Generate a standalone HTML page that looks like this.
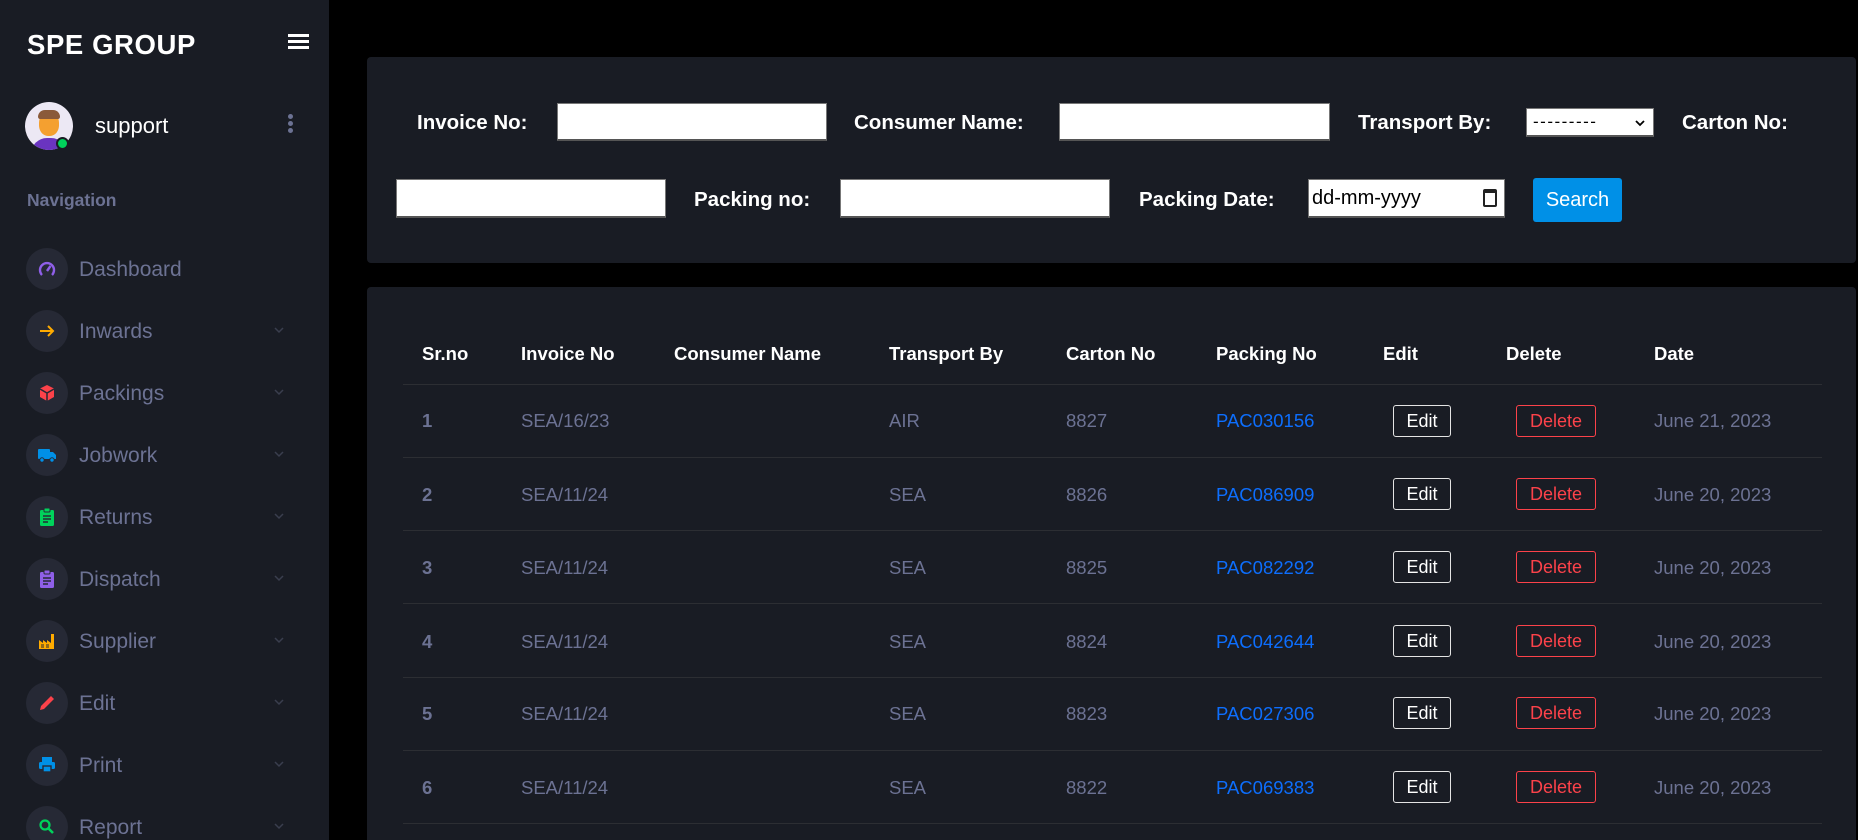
<!DOCTYPE html>
<html><head><meta charset="utf-8"><style>
*{box-sizing:border-box;margin:0;padding:0}
html,body{width:1858px;height:840px;overflow:hidden}
body{background:#000;font-family:"Liberation Sans",sans-serif;position:relative}
.sb{position:absolute;left:0;top:0;width:329px;height:840px;background:#191c24;overflow:hidden}
.a{position:absolute}
.brand{left:27px;top:29px;color:#fff;font-size:27.5px;font-weight:bold;letter-spacing:0.6px}
.ham{left:288px;top:34px;width:21px}
.ham i{display:block;height:3px;background:#fff;margin-bottom:3px}
.nav{position:absolute;left:26px;width:290px;height:42px}
.nav .c{position:absolute;left:0;top:0;width:42px;height:42px;border-radius:50%;background:#262935}
.nav .c svg{position:absolute;left:11px;top:11px}
.nav .t{position:absolute;left:53px;top:10px;font-size:21px;color:#6c7293}
.nav .ch{position:absolute;left:247px;top:14px}
.panel{position:absolute;background:#191c24;border-radius:4px}
.lab{position:absolute;color:#fff;font-weight:bold;font-size:20.5px}
.inp{position:absolute;background:#fff;border:1px solid #777;border-bottom:2px solid #555}
.th{position:absolute;top:343px;color:#fff;font-weight:bold;font-size:18.5px}
.td{position:absolute;font-size:18.5px;color:#6c7293}
.line{position:absolute;left:403px;width:1419px;height:1px;background:#2c2e33}
.be{position:absolute;width:58px;height:32px;border:1px solid #e4e4e4;border-radius:3px;color:#fff;font-size:18px;text-align:center;line-height:30px}
.bd{position:absolute;width:80px;height:32px;border:1px solid #fc424a;border-radius:3px;color:#fc424a;font-size:18px;text-align:center;line-height:30px}
</style></head><body>
<div class="sb">
<div class="a brand">SPE GROUP</div>
<div class="a ham"><i></i><i></i><i></i></div>
<div class="a" style="left:25px;top:102px;width:48px;height:48px;border-radius:50%;background:#ece8f4;overflow:hidden">
<div style="position:absolute;left:14px;top:10px;width:20px;height:24px;border-radius:45%;background:#f4a030"></div>
<div style="position:absolute;left:13px;top:8px;width:22px;height:9px;border-radius:10px 10px 3px 3px;background:#8a5a3a"></div>
<div style="position:absolute;left:6px;top:36px;width:36px;height:20px;border-radius:16px 16px 0 0;background:#6a34c0"></div>
</div>
<div class="a" style="left:56px;top:137px;width:13px;height:13px;border-radius:50%;background:#00d25b;border:2px solid #191c24"></div>
<div class="a" style="left:95px;top:113px;color:#fff;font-size:22px">support</div>
<div class="a" style="left:288px;top:114px;width:5px">
<i style="display:block;width:5px;height:5px;border-radius:50%;background:#6c7293;margin-bottom:2px"></i><i style="display:block;width:5px;height:5px;border-radius:50%;background:#6c7293;margin-bottom:2px"></i><i style="display:block;width:5px;height:5px;border-radius:50%;background:#6c7293"></i></div>
<div class="a" style="left:27px;top:190px;color:#6c7293;font-weight:bold;font-size:17.5px">Navigation</div>

<div class="nav" style="top:248px"><div class="c"><svg width="20" height="20" viewBox="0 0 20 20"><path d="M5 16A7 7 0 1 1 15 16" fill="none" stroke="#8f5fe8" stroke-width="2.4"/><path d="M10 12L13.5 7" stroke="#8f5fe8" stroke-width="2.4"/></svg></div><div class="t">Dashboard</div></div>
<div class="nav" style="top:310px"><div class="c"><svg width="20" height="20" viewBox="0 0 20 20"><path d="M3 10H16M11 5L16 10L11 15" fill="none" stroke="#ffab00" stroke-width="2"/></svg></div><div class="t">Inwards</div><svg class="ch" width="12" height="12" viewBox="0 0 12 12"><path d="M2 4L6 8L10 4" fill="none" stroke="#3a3e4e" stroke-width="1.5"/></svg></div>
<div class="nav" style="top:372px"><div class="c"><svg width="20" height="20" viewBox="0 0 20 20"><path d="M10 2L17 5.5V14L10 18L3 14V5.5Z" fill="#fc424a"/><path d="M3 6L10 10L17 6M10 10V18" stroke="#262935" stroke-width="1.5" fill="none"/></svg></div><div class="t">Packings</div><svg class="ch" width="12" height="12" viewBox="0 0 12 12"><path d="M2 4L6 8L10 4" fill="none" stroke="#3a3e4e" stroke-width="1.5"/></svg></div>
<div class="nav" style="top:434px"><div class="c"><svg width="20" height="20" viewBox="0 0 20 20"><rect x="1" y="4" width="12" height="10" rx="1" fill="#0090e7"/><path d="M13 7H16L19 10V14H13Z" fill="#0090e7"/><circle cx="5" cy="15" r="2.2" fill="#0090e7" stroke="#262935"/><circle cx="15" cy="15" r="2.2" fill="#0090e7" stroke="#262935"/></svg></div><div class="t">Jobwork</div><svg class="ch" width="12" height="12" viewBox="0 0 12 12"><path d="M2 4L6 8L10 4" fill="none" stroke="#3a3e4e" stroke-width="1.5"/></svg></div>
<div class="nav" style="top:496px"><div class="c"><svg width="20" height="20" viewBox="0 0 20 20"><rect x="3" y="3" width="14" height="16" rx="1.5" fill="#00d25b"/><rect x="7" y="1" width="6" height="4" rx="1" fill="#00d25b" stroke="#262935"/><path d="M6 9H14M6 12H14M6 15H11" stroke="#262935" stroke-width="1.4"/></svg></div><div class="t">Returns</div><svg class="ch" width="12" height="12" viewBox="0 0 12 12"><path d="M2 4L6 8L10 4" fill="none" stroke="#3a3e4e" stroke-width="1.5"/></svg></div>
<div class="nav" style="top:558px"><div class="c"><svg width="20" height="20" viewBox="0 0 20 20"><rect x="3" y="3" width="14" height="16" rx="1.5" fill="#8f5fe8"/><rect x="7" y="1" width="6" height="4" rx="1" fill="#8f5fe8" stroke="#262935"/><path d="M6 9H14M6 12H14M6 15H11" stroke="#262935" stroke-width="1.4"/></svg></div><div class="t">Dispatch</div><svg class="ch" width="12" height="12" viewBox="0 0 12 12"><path d="M2 4L6 8L10 4" fill="none" stroke="#3a3e4e" stroke-width="1.5"/></svg></div>
<div class="nav" style="top:620px"><div class="c"><svg width="20" height="20" viewBox="0 0 20 20"><path d="M2 18V9L6 12V9L10 12V9L14 12V3H17V18Z" fill="#ffab00"/><path d="M4 14H7M9 14H12M4 16H7M9 16H12" stroke="#262935"/></svg></div><div class="t">Supplier</div><svg class="ch" width="12" height="12" viewBox="0 0 12 12"><path d="M2 4L6 8L10 4" fill="none" stroke="#3a3e4e" stroke-width="1.5"/></svg></div>
<div class="nav" style="top:682px"><div class="c"><svg width="20" height="20" viewBox="0 0 20 20"><path d="M3 17L4 13L14 3L17 6L7 16Z" fill="#fc424a"/></svg></div><div class="t">Edit</div><svg class="ch" width="12" height="12" viewBox="0 0 12 12"><path d="M2 4L6 8L10 4" fill="none" stroke="#3a3e4e" stroke-width="1.5"/></svg></div>
<div class="nav" style="top:744px"><div class="c"><svg width="20" height="20" viewBox="0 0 20 20"><rect x="5" y="2" width="10" height="5" fill="#0090e7"/><rect x="2" y="7" width="16" height="7" rx="1.5" fill="#0090e7"/><rect x="6" y="11" width="8" height="6" fill="#0090e7" stroke="#262935" stroke-width="1.4"/></svg></div><div class="t">Print</div><svg class="ch" width="12" height="12" viewBox="0 0 12 12"><path d="M2 4L6 8L10 4" fill="none" stroke="#3a3e4e" stroke-width="1.5"/></svg></div>
<div class="nav" style="top:806px"><div class="c"><svg width="20" height="20" viewBox="0 0 20 20"><circle cx="8" cy="8" r="4.5" fill="none" stroke="#00d25b" stroke-width="2.2"/><path d="M11 11L16 16" stroke="#00d25b" stroke-width="2.6"/></svg></div><div class="t">Report</div><svg class="ch" width="12" height="12" viewBox="0 0 12 12"><path d="M2 4L6 8L10 4" fill="none" stroke="#3a3e4e" stroke-width="1.5"/></svg></div>
</div>

<div class="panel" style="left:367px;top:57px;width:1489px;height:206px"></div>
<div class="lab" style="left:417px;top:111px">Invoice No:</div>
<div class="inp" style="left:557px;top:103px;width:270px;height:38px"></div>
<div class="lab" style="left:854px;top:111px">Consumer Name:</div>
<div class="inp" style="left:1059px;top:103px;width:271px;height:38px"></div>
<div class="lab" style="left:1358px;top:111px">Transport By:</div>
<div class="inp" style="left:1526px;top:108px;width:128px;height:29px;font-size:17px;color:#000;padding:3px 6px;letter-spacing:1.5px">---------</div>
<svg class="a" style="left:1634px;top:118px" width="12" height="10" viewBox="0 0 12 10"><path d="M2 3L6 7L10 3" fill="none" stroke="#000" stroke-width="1.8"/></svg>
<div class="lab" style="left:1682px;top:111px">Carton No:</div>
<div class="inp" style="left:396px;top:179px;width:270px;height:39px"></div>
<div class="lab" style="left:694px;top:188px">Packing no:</div>
<div class="inp" style="left:840px;top:179px;width:270px;height:39px"></div>
<div class="lab" style="left:1139px;top:188px">Packing Date:</div>
<div class="inp" style="left:1308px;top:179px;width:197px;height:39px;font-size:20px;color:#000;padding:7px 3px">dd-mm-yyyy</div>
<div class="a" style="left:1483px;top:189px;width:14px;height:18px;border:2px solid #222;border-top-width:4px;border-radius:2px"></div>
<div class="a" style="left:1533px;top:178px;width:89px;height:44px;background:#0090e7;border-radius:3px;color:#fff;font-size:20px;text-align:center;line-height:44px">Search</div>

<div class="panel" style="left:367px;top:287px;width:1489px;height:553px;border-radius:4px 4px 0 0"></div>
<div class="th" style="left:422px">Sr.no</div>
<div class="th" style="left:521px">Invoice No</div>
<div class="th" style="left:674px">Consumer Name</div>
<div class="th" style="left:889px">Transport By</div>
<div class="th" style="left:1066px">Carton No</div>
<div class="th" style="left:1216px">Packing No</div>
<div class="th" style="left:1383px">Edit</div>
<div class="th" style="left:1506px">Delete</div>
<div class="th" style="left:1654px">Date</div>
<div class="line" style="top:384px"></div>

<div class="td" style="left:422px;top:410px;font-weight:bold">1</div><div class="td" style="left:521px;top:410px">SEA/16/23</div><div class="td" style="left:889px;top:410px">AIR</div><div class="td" style="left:1066px;top:410px">8827</div><div class="td" style="left:1216px;top:410px;color:#0d6efd">PAC030156</div><div class="be" style="left:1393px;top:405px">Edit</div><div class="bd" style="left:1516px;top:405px">Delete</div><div class="td" style="left:1654px;top:410px">June 21, 2023</div>
<div class="line" style="top:457px"></div>
<div class="td" style="left:422px;top:484px;font-weight:bold">2</div><div class="td" style="left:521px;top:484px">SEA/11/24</div><div class="td" style="left:889px;top:484px">SEA</div><div class="td" style="left:1066px;top:484px">8826</div><div class="td" style="left:1216px;top:484px;color:#0d6efd">PAC086909</div><div class="be" style="left:1393px;top:478px">Edit</div><div class="bd" style="left:1516px;top:478px">Delete</div><div class="td" style="left:1654px;top:484px">June 20, 2023</div>
<div class="line" style="top:530px"></div>
<div class="td" style="left:422px;top:557px;font-weight:bold">3</div><div class="td" style="left:521px;top:557px">SEA/11/24</div><div class="td" style="left:889px;top:557px">SEA</div><div class="td" style="left:1066px;top:557px">8825</div><div class="td" style="left:1216px;top:557px;color:#0d6efd">PAC082292</div><div class="be" style="left:1393px;top:551px">Edit</div><div class="bd" style="left:1516px;top:551px">Delete</div><div class="td" style="left:1654px;top:557px">June 20, 2023</div>
<div class="line" style="top:603px"></div>
<div class="td" style="left:422px;top:631px;font-weight:bold">4</div><div class="td" style="left:521px;top:631px">SEA/11/24</div><div class="td" style="left:889px;top:631px">SEA</div><div class="td" style="left:1066px;top:631px">8824</div><div class="td" style="left:1216px;top:631px;color:#0d6efd">PAC042644</div><div class="be" style="left:1393px;top:625px">Edit</div><div class="bd" style="left:1516px;top:625px">Delete</div><div class="td" style="left:1654px;top:631px">June 20, 2023</div>
<div class="line" style="top:677px"></div>
<div class="td" style="left:422px;top:703px;font-weight:bold">5</div><div class="td" style="left:521px;top:703px">SEA/11/24</div><div class="td" style="left:889px;top:703px">SEA</div><div class="td" style="left:1066px;top:703px">8823</div><div class="td" style="left:1216px;top:703px;color:#0d6efd">PAC027306</div><div class="be" style="left:1393px;top:697px">Edit</div><div class="bd" style="left:1516px;top:697px">Delete</div><div class="td" style="left:1654px;top:703px">June 20, 2023</div>
<div class="line" style="top:750px"></div>
<div class="td" style="left:422px;top:777px;font-weight:bold">6</div><div class="td" style="left:521px;top:777px">SEA/11/24</div><div class="td" style="left:889px;top:777px">SEA</div><div class="td" style="left:1066px;top:777px">8822</div><div class="td" style="left:1216px;top:777px;color:#0d6efd">PAC069383</div><div class="be" style="left:1393px;top:771px">Edit</div><div class="bd" style="left:1516px;top:771px">Delete</div><div class="td" style="left:1654px;top:777px">June 20, 2023</div>
<div class="line" style="top:823px"></div>
</body></html>
